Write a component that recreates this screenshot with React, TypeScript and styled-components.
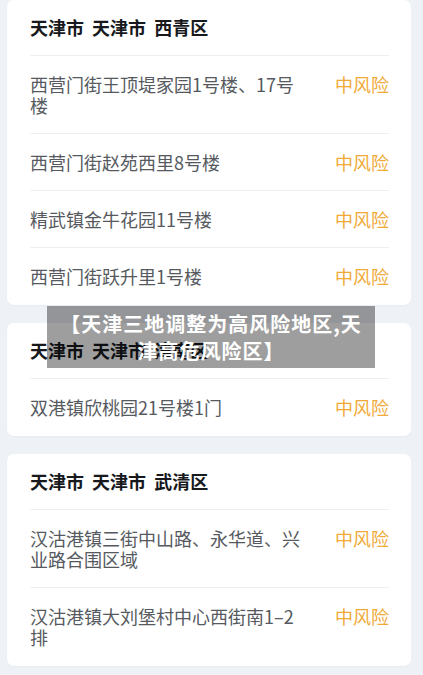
import React from 'react';
import styled, { createGlobalStyle } from 'styled-components';

const GlobalStyle = createGlobalStyle`
  html, body {
    margin: 0;
    padding: 0;
    background: #eef1f5;
  }
  body {
    font-family: 'Noto Sans CJK SC', 'Noto Sans', sans-serif;
  }
`;

const Page = styled.div`
  position: relative;
  padding: 0 12px 10px 7px;
  display: flex;
  flex-direction: column;
  gap: 18px;
`;

const Card = styled.div`
  background: #fff;
  border-radius: 7px;
  padding: 0 22px 0 23px;
  box-shadow: 0 1px 2px rgba(0, 0, 0, 0.03);
`;

const CardTitle = styled.div`
  font-size: 18px;
  line-height: 21px;
  font-weight: 700;
  color: #17191d;
  word-spacing: 4px;
  padding: 17px 0;
  border-bottom: 1px solid #eeeff1;
`;

const Row = styled.div<{ last?: boolean }>`
  display: flex;
  align-items: flex-start;
  gap: 24px;
  padding: ${({ last }) => (last ? '18px 0' : '18px 0 17px')};
  border-bottom: ${({ last }) => (last ? 'none' : '1px solid #eeeff1')};
`;

const Place = styled.div`
  flex: 1;
  font-size: 18px;
  line-height: 21px;
  color: #565a60;
`;

const Level = styled.div`
  font-size: 18px;
  line-height: 21px;
  color: #f1a937;
  white-space: nowrap;
`;

const Banner = styled.div`
  position: absolute;
  left: 47px;
  top: 306px;
  width: 328px;
  height: 62px;
  box-sizing: border-box;
  padding: 4px 10px 0;
  background: rgba(0, 0, 0, 0.38);
  color: #fff;
  font-size: 20px;
  line-height: 27px;
  letter-spacing: 1px;
  font-weight: 700;
  text-align: center;
`;

const groups = [
  {
    title: '天津市 天津市 西青区',
    places: ['西营门街王顶堤家园1号楼、17号楼', '西营门街赵苑西里8号楼', '精武镇金牛花园11号楼', '西营门街跃升里1号楼'],
  },
  {
    title: '天津市 天津市 津南区',
    places: ['双港镇欣桃园21号楼1门'],
  },
  {
    title: '天津市 天津市 武清区',
    places: ['汉沽港镇三街中山路、永华道、兴业路合围区域', '汉沽港镇大刘堡村中心西街南1–2排'],
  },
];

export default function App() {
  return (
    <Page>
      <GlobalStyle />
      {groups.map((g) => (
        <Card key={g.title}>
          <CardTitle>{g.title}</CardTitle>
          {g.places.map((p, i) => (
            <Row key={p} last={i === g.places.length - 1}>
              <Place>{p}</Place>
              <Level>中风险</Level>
            </Row>
          ))}
        </Card>
      ))}
      <Banner>【天津三地调整为高风险地区,天津高危风险区】</Banner>
    </Page>
  );
}
